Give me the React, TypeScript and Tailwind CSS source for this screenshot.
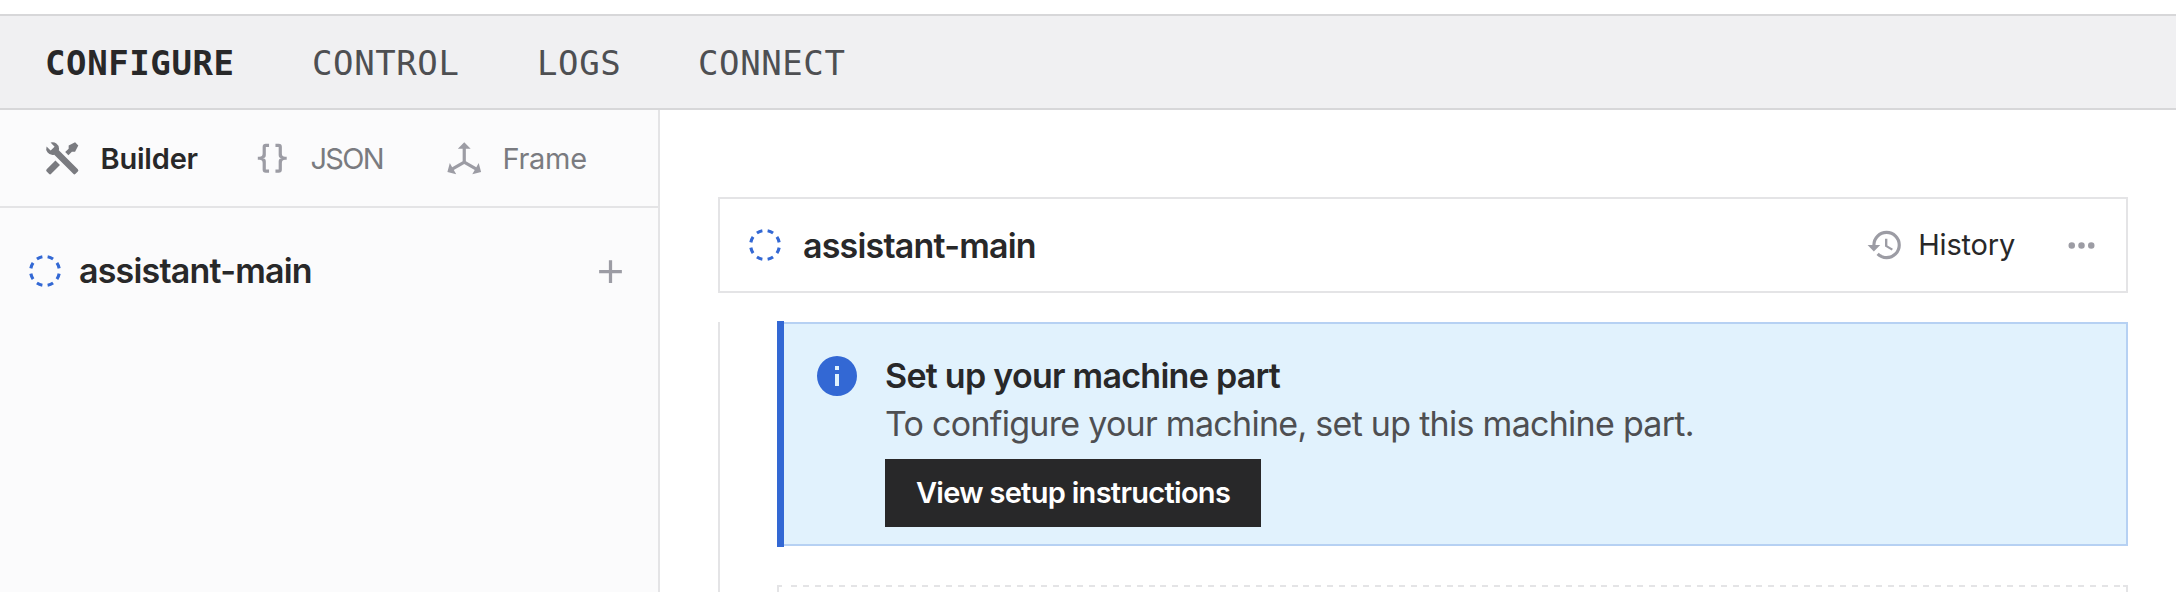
const SANS = "font-['Inter','Liberation_Sans',sans-serif]";

const icons = {
  tools:
    'M21.71 20.29L20.29 21.71A1 1 0 0 1 18.88 21.71L7 9.85A3.81 3.81 0 0 1 6 10A4 4 0 0 1 2.22 4.7L4.76 7.24L5.29 6.71L6.71 5.29L7.24 4.76L4.7 2.22A4 4 0 0 1 10 6A3.81 3.81 0 0 1 9.85 7L21.71 18.88A1 1 0 0 1 21.71 20.29M2.29 18.88A1 1 0 0 0 2.29 20.29L3.71 21.71A1 1 0 0 0 5.12 21.71L10.59 16.25L7.76 13.42M20 2L16 4V6L13.83 8.17L15.83 10.17L18 8H20L22 4L20 2Z',
  braces:
    'M8,3A2,2 0 0,0 6,5V9A2,2 0 0,1 4,11H3V13H4A2,2 0 0,1 6,15V19A2,2 0 0,0 8,21H10V19H8V14A2,2 0 0,0 6,12A2,2 0 0,0 8,10V5H10V3M16,3A2,2 0 0,1 18,5V9A2,2 0 0,0 20,11H21V13H20A2,2 0 0,0 18,15V19A2,2 0 0,1 16,21H14V19H16V14A2,2 0 0,1 18,12A2,2 0 0,1 16,10V5H14V3H16Z',
  axis: 'M12,2L16,6H13V13.85L19.53,17.61L21,15.03L22.5,20.5L17,21.96L18.53,19.35L12,15.58L5.47,19.35L7,21.96L1.5,20.5L3,15.03L4.47,17.61L11,13.85V6H8L12,2Z',
  history:
    'M13.5,8H12V13L16.28,15.54L17,14.33L13.5,12.25V8M13,3A9,9 0 0,0 4,12H1L4.96,16.03L9,12H6A7,7 0 0,1 13,5A7,7 0 0,1 20,12A7,7 0 0,1 13,19C11.07,19 9.32,18.21 8.06,16.94L6.64,18.36C8.27,20 10.5,21 13,21A9,9 0 0,0 22,12A9,9 0 0,0 13,3',
  dots: 'M16,12A2,2 0 0,1 18,10A2,2 0 0,1 20,12A2,2 0 0,1 18,14A2,2 0 0,1 16,12M10,12A2,2 0 0,1 12,10A2,2 0 0,1 14,12A2,2 0 0,1 12,14A2,2 0 0,1 10,12M4,12A2,2 0 0,1 6,10A2,2 0 0,1 8,12A2,2 0 0,1 6,14A2,2 0 0,1 4,12Z',
  plus: 'M19,13H13V19H11V13H5V11H11V5H13V11H19V13Z',
  info: 'M13,9H11V7H13M13,17H11V11H13M12,2A10,10 0 0,0 2,12A10,10 0 0,0 12,22A10,10 0 0,0 22,12A10,10 0 0,0 12,2Z',
};

function Icon({ name, className }: { name: keyof typeof icons; className: string }) {
  return (
    <svg viewBox="0 0 24 24" fill="currentColor" className={`shrink-0 ${className}`} aria-hidden="true">
      <path d={icons[name]} />
    </svg>
  );
}

function StatusRing() {
  return (
    <svg viewBox="0 0 32 32" className="size-8 shrink-0 text-[#3368d4]" aria-hidden="true">
      <circle
        cx="16"
        cy="16"
        r="14.4"
        fill="none"
        stroke="currentColor"
        strokeWidth="3.1"
        pathLength="100"
        strokeDasharray="6.5 6"
        strokeDashoffset="-3"
      />
    </svg>
  );
}

export default function App() {
  return (
    <div className={`flex h-[592px] w-[2176px] flex-col overflow-hidden bg-white pt-3.5 text-[#282829] ${SANS}`}>
      <nav className="flex h-24 shrink-0 items-center border-y-2 border-[#d7d7d9] bg-[#f0f0f2] pt-0.5 pl-[45px] font-['DejaVu_Sans_Mono','Liberation_Mono',monospace] text-[34px] tracking-[0.6px] text-[#4e4f52]">
        <a className="w-[267px] font-bold text-[#282829]">CONFIGURE</a>
        <a className="w-[225px]">CONTROL</a>
        <a className="w-[161px]">LOGS</a>
        <a>CONNECT</a>
      </nav>

      <div className="flex min-h-0 flex-1">
        <aside className="w-[660px] shrink-0 border-r-2 border-[#e4e4e6] bg-[#fbfbfc]">
          <div className="flex h-[98px] items-center border-b-2 border-[#e4e4e6] pt-px pl-[43px] text-[29px] text-[#7a7b80]">
            <div className="flex w-[210px] items-center gap-[19px]">
              <Icon name="tools" className="size-[38.5px]" />
              <span className="font-semibold tracking-[-0.2px] text-[#282829]">Builder</span>
            </div>
            <div className="flex w-[192px] items-center gap-[19px]">
              <Icon name="braces" className="size-[38.5px] text-[#9c9ca4]" />
              <span className="tracking-[-1.7px]">JSON</span>
            </div>
            <div className="flex items-center gap-[19px]">
              <Icon name="axis" className="size-[38.5px] text-[#9c9ca4]" />
              <span className="tracking-[-0.3px]">Frame</span>
            </div>
          </div>
          <div className="flex items-center pt-[43px] pr-[28px] pl-[29px]">
            <StatusRing />
            <span className="ml-[18px] flex-1 text-[34px] leading-[40px] font-semibold tracking-[-0.8px]">assistant-main</span>
            <Icon name="plus" className="size-[39px] text-[#9c9ca4]" />
          </div>
        </aside>

        <main className="flex min-w-0 flex-1 flex-col pt-[87px] pr-12 pl-[58px]">
          <section className="flex h-24 shrink-0 items-center border-2 border-[#e4e4e6] pr-[25px] pl-[29px]">
            <StatusRing />
            <h2 className="ml-[22px] flex-1 text-[34px] font-semibold tracking-[-0.8px]">assistant-main</h2>
            <Icon name="history" className="size-[38px] text-[#9c9ca4]" />
            <span className="mr-[47px] ml-[14px] text-[29px] tracking-[-0.2px]">History</span>
            <Icon name="dots" className="size-[39px] text-[#9c9ca4]" />
          </section>

          <div className="mt-[29px] flex min-h-0 flex-1 flex-col border-l-2 border-[#e4e4e6] pl-[57px]">
            <section className="-mt-px flex h-[226px] shrink-0">
              <div className="w-[7px] shrink-0 bg-[#3368d4]" />
              <div className="my-px flex flex-1 border-y-2 border-r-2 border-[#b6d1f3] bg-[#e1f2fd] pl-[29px]">
                <Icon name="info" className="mt-[28px] size-12 text-[#3368d4]" />
                <div className="ml-[24px] flex flex-col items-start pt-[28px]">
                  <h3 className="text-[34px] leading-[48px] font-semibold tracking-[-0.73px]">Set up your machine part</h3>
                  <p className="text-[34px] leading-[48px] tracking-[-0.72px] text-[#4e4f52]">
                    To configure your machine, set up this machine part.
                  </p>
                  <button className="mt-[11px] h-[68px] w-[376px] bg-[#282829] text-[29px] font-semibold tracking-[-0.7px] text-white">
                    View setup instructions
                  </button>
                </div>
              </div>
            </section>
            <div className="mt-[38px] flex h-[7px] shrink-0 justify-between border-x-2 border-[#e4e4e6]">
              <div className="h-[2px] w-[3px] bg-[#e4e4e6]" />
              <div className="h-[2px] w-[1335px] bg-[repeating-linear-gradient(90deg,transparent_0,transparent_5.92px,#e4e4e6_5.92px,#e4e4e6_11.92px)]" />
              <div className="h-[2px] w-[3px] bg-[#e4e4e6]" />
            </div>
          </div>
        </main>
      </div>
    </div>
  );
}
